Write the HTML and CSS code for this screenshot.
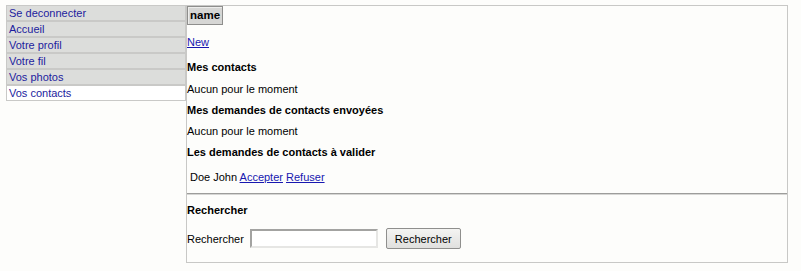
FILE: index.html
```html
<!DOCTYPE html>
<html lang="fr">
<head>
<meta charset="utf-8">
<title>Vos contacts</title>
<link rel="stylesheet" href="styles.css">
</head>
<body>
<div class="page">
  <nav class="menu">
    <a class="menu-item" href="#">Se deconnecter</a>
    <a class="menu-item" href="#">Accueil</a>
    <a class="menu-item" href="#">Votre profil</a>
    <a class="menu-item" href="#">Votre fil</a>
    <a class="menu-item" href="#">Vos photos</a>
    <a class="menu-item current" href="#">Vos contacts</a>
  </nav>
  <main class="main">
    <section class="contacts">
      <table class="name-table"><tr><th>name</th></tr></table>
      <p class="new"><a href="#">New</a></p>
      <h3 class="title t1">Mes contacts</h3>
      <p class="text first">Aucun pour le moment</p>
      <h3 class="title">Mes demandes de contacts envoyées</h3>
      <p class="text">Aucun pour le moment</p>
      <h3 class="title">Les demandes de contacts à valider</h3>
      <div class="request">Doe John <a href="#">Accepter</a> <a href="#">Refuser</a></div>
    </section>
    <section class="search">
      <h3 class="title st">Rechercher</h3>
      <form class="search-form">
        <label class="search-label" for="q">Rechercher</label>
        <input class="search-input" id="q" type="text">
        <button class="search-btn" type="button">Rechercher</button>
      </form>
    </section>
  </main>
</div>
</body>
</html>
```

FILE: styles.css
```css
html, body {
  margin: 0;
  padding: 0;
  background: #fdfdfb;
}
body {
  font-family: "Liberation Sans", Arial, sans-serif;
  font-size: 11px;
  line-height: 14px;
  color: #000;
}
.page {
  display: flex;
  align-items: flex-start;
  padding: 5px 0 0 6px;
}
.menu {
  display: flex;
  flex-direction: column;
  width: 180px;
}
.menu-item {
  display: block;
  height: 14px;
  padding-left: 2px;
  background: #dcdddb;
  border: 1px solid #c9c9c7;
  color: #1c1c9e;
  text-decoration: none;
}
.menu-item.current {
  background: #ffffff;
}
.main {
  width: 600px;
  border: 1px solid #c8c8c6;
  height: 256px;
}
.contacts {
  height: 187px;
  border-bottom: 1px solid #9d9d9b;
  box-shadow: 0 1px 0 #d6d6d4;
}
.name-table {
  border-collapse: collapse;
  margin: 0;
}
.name-table th {
  height: 17px;
  padding: 0 2px;
  background: #d6d6d4;
  border: 1px solid #8e8e8c;
  box-shadow: inset 1px 1px 0 #ededeb;
  font-weight: bold;
  font-size: 11.5px;
  text-align: left;
  line-height: 17px;
}
.new {
  margin: 10px 0 0;
}
a {
  color: #1818b0;
}
.title {
  margin: 7px 0 0;
  font-size: 11px;
  font-weight: bold;
}
.title.t1 {
  margin-top: 11px;
}
.text {
  margin: 7px 0 0;
}
.text.first {
  margin-top: 8px;
}
.request {
  margin: 11px 0 0 3px;
}
.search .title.st {
  margin-top: 9px;
}
.search-form {
  display: flex;
  align-items: center;
  margin-top: 11px;
}
.search-label {
  margin-right: 6px;
}
.search-input {
  width: 124px;
  height: 15px;
  padding: 0;
  margin: 0 8px 0 0;
  border: 2px solid;
  border-color: #a3a3a1 #e6e6e4 #e6e6e4 #a3a3a1;
  background: #fff;
  font: inherit;
}
.search-btn {
  height: 21px;
  padding: 0 8px;
  border: 1px solid #8f8f8d;
  border-radius: 2px;
  background: linear-gradient(#f4f4f2, #e0e0de);
  font: inherit;
  color: #000;
}
```
